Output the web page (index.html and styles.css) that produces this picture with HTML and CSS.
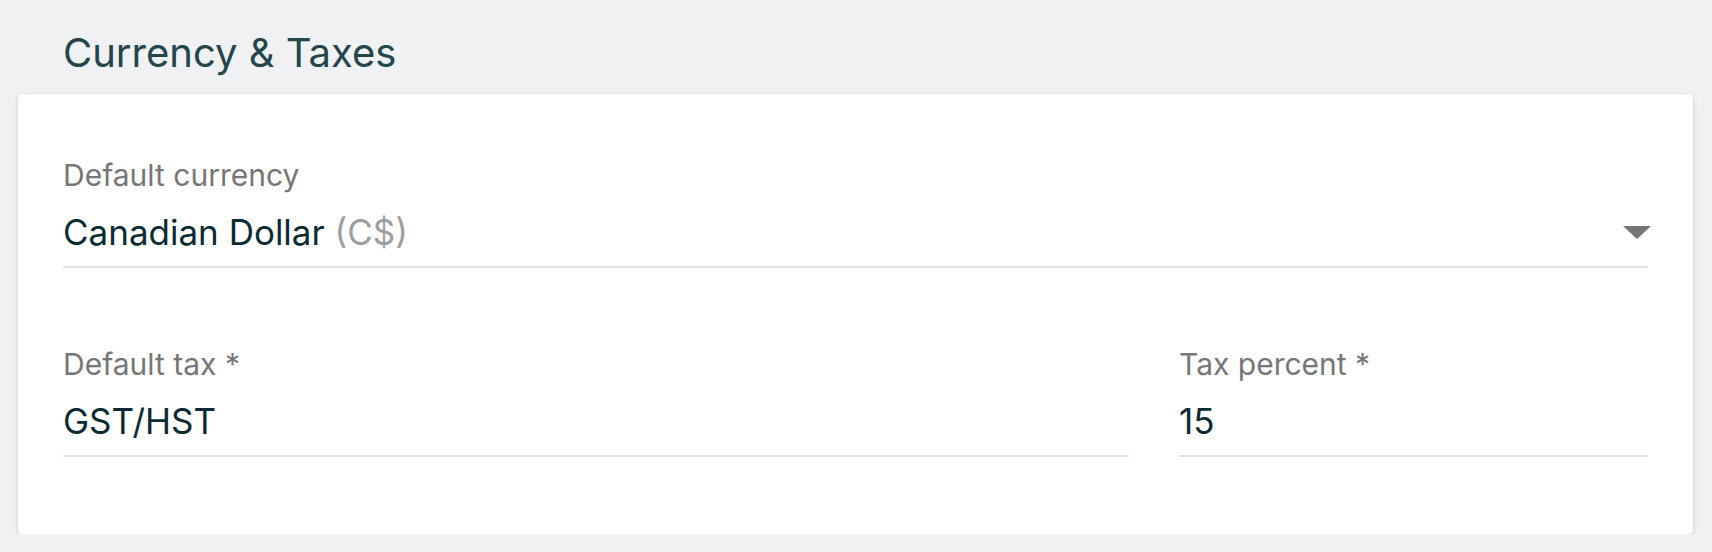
FILE: index.html
```html
<!DOCTYPE html>
<html lang="en">
<head>
  <meta charset="UTF-8">
  <title>Currency &amp; Taxes</title>
  <link rel="stylesheet" href="styles.css">
</head>
<body>
  <div class="settings">
    <h2 class="section-title">Currency &amp; Taxes</h2>

    <div class="card">
      <div class="field">
        <label class="field-label">Default currency</label>
        <div class="field-input select">
          <span class="field-value">Canadian Dollar <span class="muted">(C$)</span></span>
          <span class="caret"></span>
        </div>
      </div>

      <div class="field-row">
        <div class="field">
          <label class="field-label">Default tax *</label>
          <div class="field-input">
            <span class="field-value">GST/HST</span>
          </div>
        </div>
        <div class="field">
          <label class="field-label">Tax percent *</label>
          <div class="field-input">
            <span class="field-value">15</span>
          </div>
        </div>
      </div>
    </div>
  </div>
</body>
</html>
```

FILE: styles.css
```css
:root {
  --page-bg: #f0f1f3;
  --title: #22464c;
  --text: #0b2a32;
  --label: #767676;
  --muted: #9e9e9e;
  --line: #e0e0e0;
}

body {
  margin: 0;
  background: var(--page-bg);
  font-family: 'Inter', 'Roboto', sans-serif;
  color: var(--text);
}

.settings {
  padding: 0 19px 0 18px;
}

.section-title {
  margin: 0;
  padding: 29px 0 0 45px;
  height: 94px;
  box-sizing: border-box;
  font-size: 40px;
  line-height: 48px;
  font-weight: 400;
  color: var(--title);
}

.card {
  background: white;
  border-radius: 4px;
  box-shadow: 0 1px 3px rgba(0, 0, 0, 0.16), 0 3px 8px rgba(0, 0, 0, 0.06);
  padding: 63px 45px 77px;
}

.field-label {
  display: block;
  font-size: 30px;
  line-height: 36px;
  color: var(--label);
}

.field-input {
  display: flex;
  align-items: center;
  justify-content: space-between;
  margin-top: 19px;
  padding-bottom: 14px;
  border-bottom: 2px solid var(--line);
  font-size: 35px;
  line-height: 40px;
}

.muted {
  color: var(--muted);
}

.caret {
  width: 0;
  height: 0;
  margin-right: -3px;
  border-left: 14px solid transparent;
  border-right: 14px solid transparent;
  border-top: 13px solid var(--label);
}

.field-row {
  display: grid;
  grid-template-columns: 1fr 469px;
  column-gap: 50px;
  margin-top: 78px;
}
```
